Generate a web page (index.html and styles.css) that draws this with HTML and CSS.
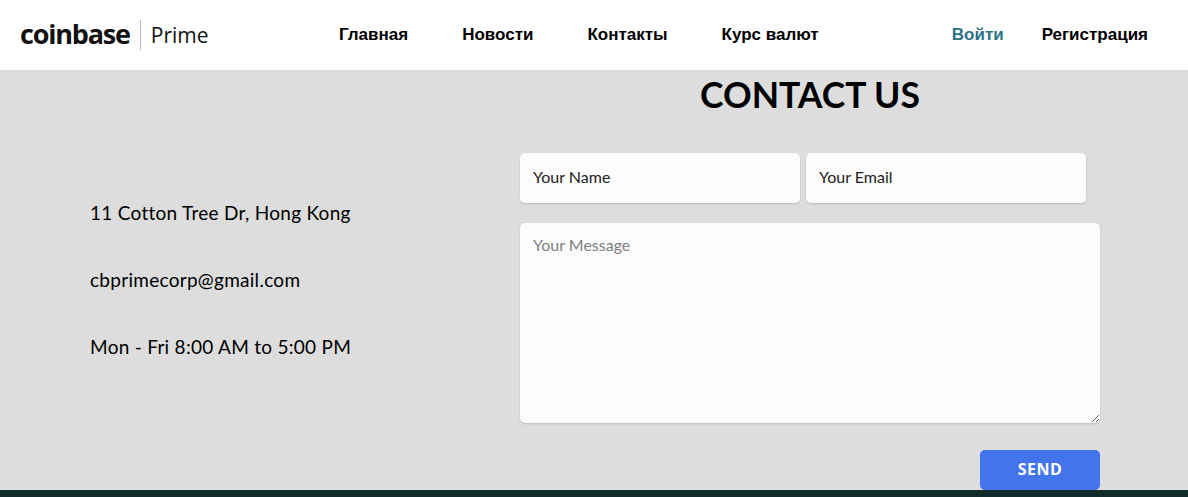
FILE: index.html
```html
<!DOCTYPE html>
<html lang="ru">
<head>
    <meta charset="UTF-8">
    <meta name="viewport" content="width=device-width, initial-scale=1.0">
    <title>Coinbase Prime</title>
    <link rel="stylesheet" href="styles.css">
</head>
<body>

    <header class="site-header">
        <a href="#" class="logo">
            <span class="logo-name">coinbase</span>
            <span class="logo-prime">Prime</span>
        </a>
        <nav class="main-nav">
            <a href="#">Главная</a>
            <a href="#">Новости</a>
            <a href="#">Контакты</a>
            <a href="#">Курс валют</a>
        </nav>
        <div class="auth-nav">
            <a href="#" class="login-link">Войти</a>
            <a href="#">Регистрация</a>
        </div>
    </header>

    <main class="contact">
        <div class="contact-info">
            <p>11 Cotton Tree Dr, Hong Kong</p>
            <p>cbprimecorp@gmail.com</p>
            <p>Mon - Fri 8:00 AM to 5:00 PM</p>
        </div>

        <form class="contact-form">
            <h1>CONTACT US</h1>
            <div class="form-row">
                <input type="text" placeholder="Your Name">
                <input type="email" placeholder="Your Email">
            </div>
            <textarea placeholder="Your Message"></textarea>
            <div class="form-actions">
                <button type="button">SEND</button>
            </div>
        </form>
    </main>

    <footer class="site-footer"></footer>

</body>
</html>
```

FILE: styles.css
```css
* {
    box-sizing: border-box;
}

body {
    font-family: 'Lato', 'Open Sans', sans-serif;
    background-color: #dddddd;
    margin: 0;
    color: #000;
    overflow: hidden;
}

a {
    color: inherit;
    text-decoration: none;
}

.site-header {
    height: 70px;
    background-color: #fff;
    display: flex;
    align-items: center;
    padding: 0 40px 0 20px;
    font-family: 'Liberation Sans', Arial, sans-serif;
    font-size: 17px;
    font-weight: bold;
}

.logo {
    display: flex;
    align-items: center;
    width: 319px;
    font-family: 'Open Sans', sans-serif;
    color: #111;
}

.logo-name {
    font-size: 27px;
    font-weight: 700;
    letter-spacing: -1.2px;
    padding: 0 10px 3px 0;
}

.logo-prime {
    font-size: 21px;
    font-weight: 400;
    border-left: 1px solid #bbb;
    padding: 0 0 0 10px;
    line-height: 30px;
}

.main-nav {
    display: flex;
    gap: 54px;
}

.auth-nav {
    display: flex;
    gap: 38px;
    margin-left: auto;
}

.login-link {
    color: #2b7286;
}

.contact {
    height: 420px;
    display: flex;
}

.contact-info {
    width: 520px;
    padding: 131px 0 0 90px;
    font-size: 19px;
    letter-spacing: 0.28px;
}

.contact-info p {
    margin: 0 0 44px;
    height: 23px;
    line-height: 23px;
}

.contact-form {
    width: 580px;
}

.contact-form h1 {
    margin: 0;
    height: 83px;
    padding-top: 4px;
    font-size: 35.5px;
    line-height: 42px;
    font-weight: 700;
    text-align: center;
}

.form-row {
    display: flex;
    gap: 6px;
    margin-bottom: 20px;
}

.contact-form input,
.contact-form textarea {
    display: block;
    border: none;
    border-radius: 5px;
    background-color: #fcfcfc;
    box-shadow: 0 1px 2px rgba(0, 0, 0, 0.15);
    padding: 12px 13px;
    font-family: inherit;
    font-size: 16px;
    outline: none;
}

.contact-form input {
    width: 280px;
    height: 50px;
    padding-bottom: 16px;
}

.contact-form input::placeholder {
    color: #222;
}

.contact-form textarea {
    width: 580px;
    height: 200px;
}

.contact-form textarea::placeholder {
    color: #808080;
}

.form-actions {
    display: flex;
    justify-content: flex-end;
    margin-top: 27px;
}

.contact-form button {
    width: 120px;
    height: 40px;
    border: none;
    border-radius: 5px;
    padding: 0 0 2px;
    background-color: #4274ec;
    color: #fff;
    font-family: 'Open Sans', sans-serif;
    font-size: 16px;
    font-weight: 700;
    letter-spacing: 0.5px;
}

.site-footer {
    height: 7px;
    background-color: #122b2b;
}
```
